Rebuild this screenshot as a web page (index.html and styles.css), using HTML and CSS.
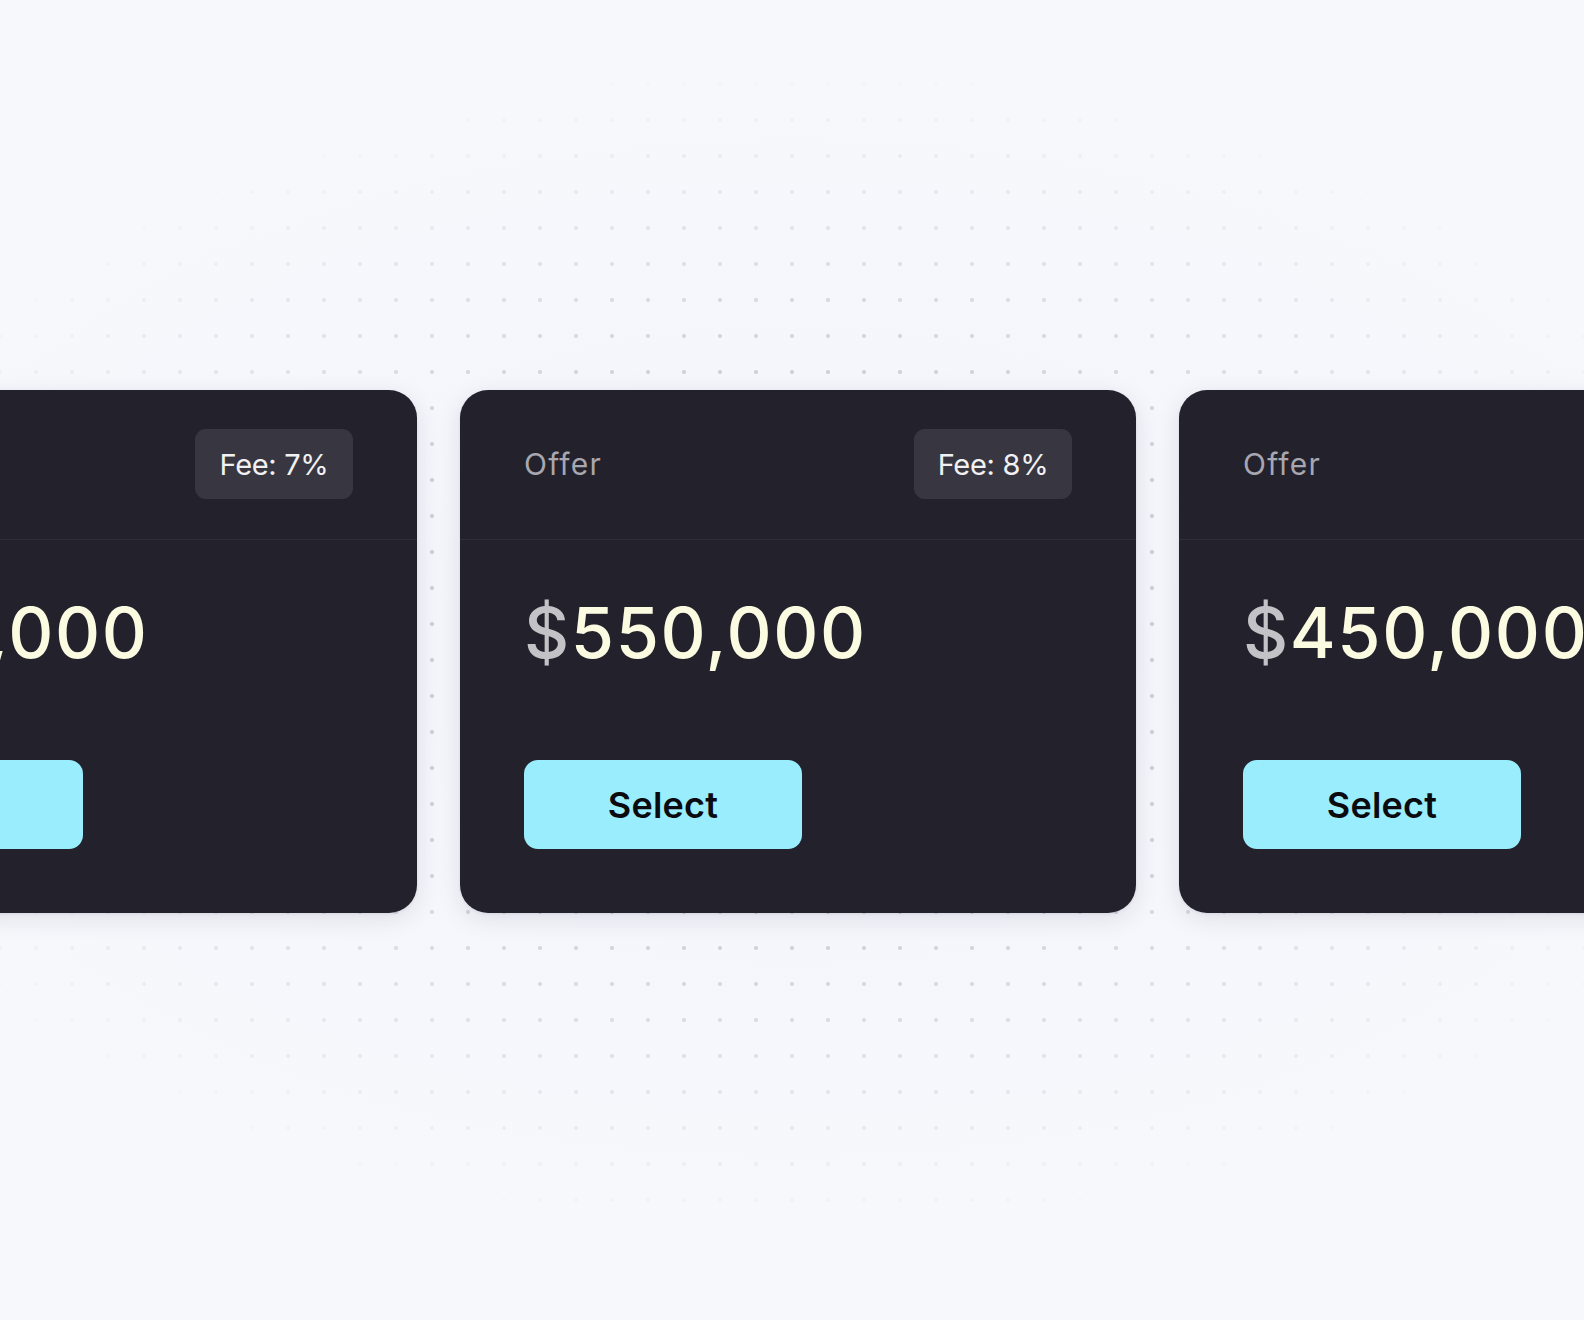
FILE: index.html
```html
<!DOCTYPE html>
<html lang="en">
<head>
<meta charset="utf-8">
<title>Offers</title>
<link rel="stylesheet" href="styles.css">
</head>
<body>
<div class="stage">
  <div class="dots"></div>
  <div class="track">
    <div class="card">
      <div class="card-head">
        <span class="label">Offer</span>
        <span class="fee">Fee: 7%</span>
      </div>
      <div class="card-body">
        <div class="price"><span class="cur">$</span>650,000</div>
        <button class="select">Select</button>
      </div>
    </div>
    <div class="card">
      <div class="card-head">
        <span class="label">Offer</span>
        <span class="fee">Fee: 8%</span>
      </div>
      <div class="card-body">
        <div class="price"><span class="cur">$</span>550,000</div>
        <button class="select">Select</button>
      </div>
    </div>
    <div class="card">
      <div class="card-head">
        <span class="label">Offer</span>
        <span class="fee">Fee: 6%</span>
      </div>
      <div class="card-body">
        <div class="price"><span class="cur">$</span>450,000</div>
        <button class="select">Select</button>
      </div>
    </div>
  </div>
</div>
</body>
</html>
```

FILE: styles.css
```css
* { box-sizing: border-box; }
html, body {
  margin: 0;
  padding: 0;
  background: #f6f7fc;
  font-family: Inter, "Noto Sans", sans-serif;
}
.stage {
  position: relative;
  width: 1584px;
  height: 1320px;
  overflow: hidden;
  background: radial-gradient(ellipse 1000px 560px at 50% 49%, #f3f4fa 0%, #f6f7fc 70%, #f7f8fc 100%);
  padding-top: 390px;
}
.dots {
  position: absolute;
  inset: 0;
  background-image: radial-gradient(circle at 18px 18px, #cdcdd5 0, #cdcdd5 1.5px, rgba(205,205,213,0) 2.5px);
  background-size: 36px 36px;
  background-position: -18px -6px;
  -webkit-mask-image: radial-gradient(ellipse 1000px 590px at 50% 49.5%, #000 0%, #000 45%, rgba(0,0,0,0) 100%);
  mask-image: radial-gradient(ellipse 1000px 590px at 50% 49.5%, #000 0%, #000 45%, rgba(0,0,0,0) 100%);
}
.track {
  position: relative;
  display: flex;
  gap: 43px;
  margin-left: -259px;
  width: max-content;
}
.card {
  width: 676px;
  height: 523px;
  flex: none;
  background: #23222c;
  border-radius: 28px;
  box-shadow: 0 6px 24px rgba(30, 30, 60, 0.10), 0 1px 3px rgba(30, 30, 60, 0.08);
  display: flex;
  flex-direction: column;
}
.card-head {
  height: 150px;
  padding: 39px 64px 0 64px;
  border-bottom: 1px solid #2f2e39;
  display: flex;
  justify-content: space-between;
  align-items: flex-start;
}
.label {
  height: 70px;
  display: flex;
  align-items: center;
  font-size: 30px;
  color: #a8a7b0;
  letter-spacing: 1.2px;
}
.fee {
  height: 70px;
  width: 158px;
  display: flex;
  align-items: center;
  justify-content: center;
  background: #383741;
  border-radius: 11px;
  font-size: 29px;
  color: #f1f1f3;
  letter-spacing: -0.3px;
}
.card-body {
  padding: 59px 64px 0 64px;
  display: flex;
  flex-direction: column;
  align-items: flex-start;
}
.price {
  font-size: 70px;
  line-height: 68px;
  font-weight: 500;
  color: #fbfbe2;
  letter-spacing: 1.6px;
}
.cur { color: #c3c3c7; }
.select {
  margin-top: 93px;
  width: 278px;
  height: 89px;
  border: none;
  border-radius: 14px;
  background: #9aedfc;
  color: #0b0b0f;
  font-family: Inter, "Noto Sans", sans-serif;
  font-size: 36px;
  font-weight: 600;
  letter-spacing: 0.2px;
  padding: 0;
}
```
